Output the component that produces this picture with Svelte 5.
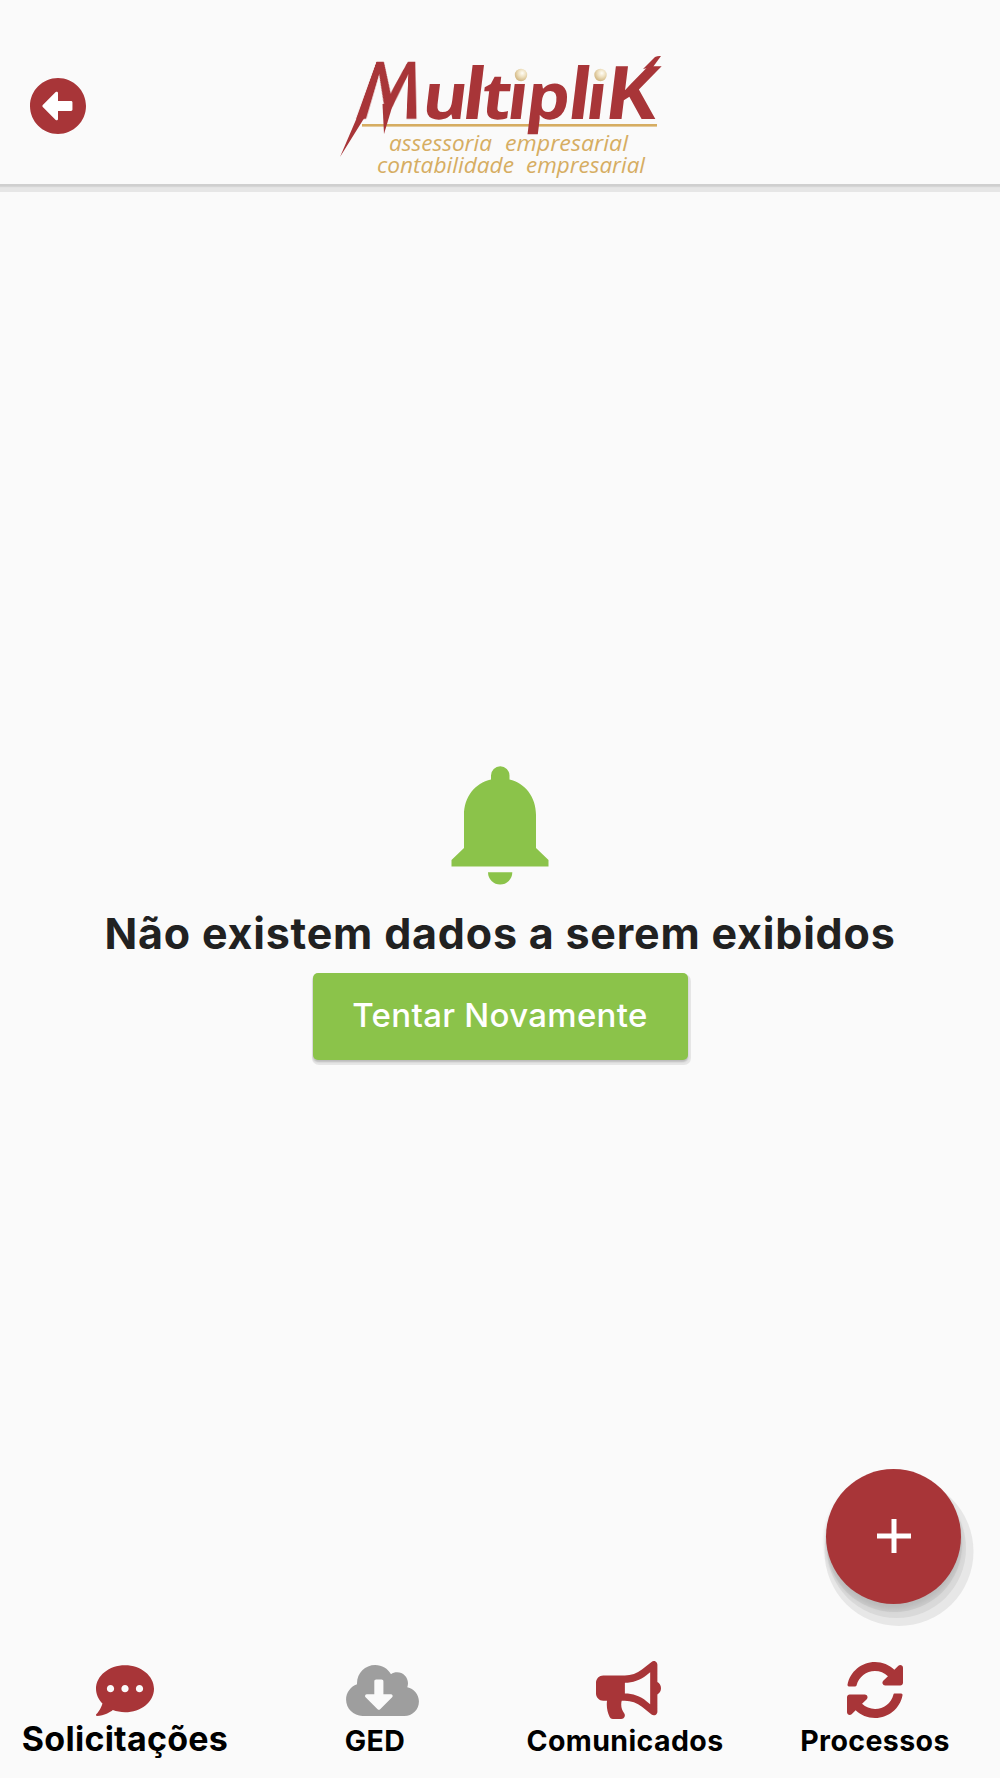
<script lang="ts">
  interface Tab {
    label: string;
    viewBox: string;
    width: number;
    height: number;
    path: string;
    active: boolean;
    large?: boolean;
    shift?: number;
  }

  const tabs: Tab[] = [
    {
      label: 'Solicitações',
      viewBox: '0 32 512 448',
      width: 58,
      height: 51,
      active: true,
      large: true,
      path: 'M256 32C114.6 32 0 125.1 0 240c0 49.6 21.4 95 57 130.7C44.5 421.1 2.7 466 2.2 466.5c-2.2 2.3-2.8 5.7-1.5 8.7S4.8 480 8 480c66.3 0 116-31.8 140.6-51.4 32.7 12.3 69 19.4 107.4 19.4 141.4 0 256-93.1 256-208S397.4 32 256 32zM128 272c-17.7 0-32-14.3-32-32s14.3-32 32-32 32 14.3 32 32-14.3 32-32 32zm128 0c-17.7 0-32-14.3-32-32s14.3-32 32-32 32 14.3 32 32-14.3 32-32 32zm128 0c-17.7 0-32-14.3-32-32s14.3-32 32-32 32 14.3 32 32-14.3 32-32 32z',
    },
    {
      label: 'GED',
      viewBox: '0 32 640 448',
      width: 73,
      height: 51,
      active: false,
      shift: 15,
      path: 'M537.6 226.6c4.1-10.7 6.4-22.4 6.4-34.6 0-53-43-96-96-96-19.7 0-38.1 6-53.3 16.2C367 64.2 315.3 32 256 32c-88.4 0-160 71.6-160 160 0 2.7.1 5.4.2 8.1C40.2 219.8 0 273.2 0 336c0 79.5 64.5 144 144 144h368c70.7 0 128-57.3 128-128 0-61.9-44-113.6-102.4-125.4zm-132.9 88.7L299.3 420.7c-6.2 6.2-16.4 6.2-22.6 0L171.3 315.3c-10.1-10.1-2.9-27.3 11.3-27.3H248V176c0-8.8 7.2-16 16-16h48c8.8 0 16 7.2 16 16v112h65.4c14.2 0 21.4 17.2 11.3 27.3z',
    },
    {
      label: 'Comunicados',
      viewBox: '0 0 576 512',
      width: 65,
      height: 58,
      active: true,
      shift: 7,
      path: 'M576 240c0-23.63-12.95-44.04-32-55.12V32.01C544 23.26 537.02 0 512 0c-7.12 0-14.19 2.38-19.98 7.02l-85.03 68.03C364.28 109.19 310.66 128 256 128H64c-35.35 0-64 28.65-64 64v96c0 35.35 28.65 64 64 64h33.7c-1.39 10.48-2.18 21.14-2.18 32 0 39.77 9.26 77.35 25.56 110.94 5.19 10.69 16.52 17.06 28.4 17.06h74.28c26.05 0 41.69-29.84 25.9-50.56-16.4-21.52-26.15-48.36-26.15-77.44 0-11.11 1.62-21.79 4.41-32H256c54.66 0 108.28 18.81 150.98 52.95l85.03 68.03a32.023 32.023 0 0 0 19.98 7.02c24.92 0 32-22.78 32-32V295.13C563.05 284.04 576 263.63 576 240zm-96 141.42l-33.05-26.44C392.95 311.78 325.12 288 256 288v-96c69.12 0 136.95-23.78 190.95-66.98L480 98.58v282.84z',
    },
    {
      label: 'Processos',
      viewBox: '8 8 496 496',
      width: 56,
      height: 56,
      active: true,
      path: 'M370.72 133.28C339.458 104.008 298.888 87.962 255.848 88c-77.458.068-144.328 53.178-162.791 126.85-1.344 5.363-6.122 9.15-11.651 9.15H24.103c-7.498 0-13.194-6.807-11.807-14.176C33.933 94.924 134.813 8 256 8c66.448 0 126.791 26.136 171.315 68.685L463.03 40.97C478.149 25.851 504 36.559 504 57.941V192c0 13.255-10.745 24-24 24H345.941c-21.382 0-32.09-25.851-16.971-40.971l41.75-41.749zM32 296h134.059c21.382 0 32.09 25.851 16.971 40.971l-41.75 41.75c31.262 29.273 71.835 45.319 114.876 45.28 77.418-.07 144.315-53.144 162.787-126.849 1.344-5.363 6.122-9.15 11.651-9.15h57.304c7.498 0 13.194 6.807 11.807 14.176C478.067 417.076 377.187 504 256 504c-66.448 0-126.791-26.136-171.315-68.685L48.97 471.03C33.851 486.149 8 475.441 8 454.059V320c0-13.255 10.745-24 24-24z',
    },
  ];
</script>

<div class="screen">
  <header class="top-bar">
    <button class="back" aria-label="Voltar">
      <svg viewBox="8 8 496 496" width="56" height="56">
        <circle cx="256" cy="256" r="240" fill="#fff" />
        <path fill="#a83538" d="M256 504C119 504 8 393 8 256S119 8 256 8s248 111 248 248-111 248-248 248zm116-292H256v-70.9c0-10.7-13-16.1-20.5-8.5L121.2 247.5c-4.7 4.7-4.7 12.2 0 16.9l114.3 114.9c7.6 7.6 20.5 2.2 20.5-8.5V300h116c6.6 0 12-5.4 12-12v-64c0-6.6-5.4-12-12-12z" />
      </svg>
    </button>
    <div class="logo">
      <span class="initial">M</span>
      <svg viewBox="0 0 340 144" width="340" height="144">
        <defs>
          <radialGradient id="pearl" cx="0.6" cy="0.35" r="0.7">
            <stop offset="0" stop-color="#fffdf6" />
            <stop offset="0.45" stop-color="#eee0bf" />
            <stop offset="1" stop-color="#cdb078" />
          </radialGradient>
        </defs>
        <rect x="32" y="84" width="295" height="2.6" fill="#d6ad62" />
        <!-- Strokes that run out of the first and last letters -->
        <path class="flourish" d="M10 117L28 75L36 76L33 80Z" />
        <path class="flourish" d="M52.500 64L63 64L54 94Z" />
        <path class="flourish" d="M313 29L325 17Q328 15.500 331 16L323 27Z" />
        <text
          class="wordmark"
          transform="translate(0 79.4) skewX(-7) scale(1.08 1)"
          x="83.500 120.300 138.300 162 179.600 218 235 252"
        >u<tspan class="tall">l</tspan>tıp<tspan class="tall">l</tspan>ı<tspan class="final">K</tspan></text>
        <circle cx="191" cy="35" r="6.2" fill="url(#pearl)" />
        <circle cx="270.5" cy="35" r="6.2" fill="url(#pearl)" />
        <text class="tagline" x="59" y="111" textLength="103" lengthAdjust="spacingAndGlyphs">assessoria</text>
        <text class="tagline" x="175" y="111" textLength="123" lengthAdjust="spacingAndGlyphs">empresarial</text>
        <text class="tagline" x="47" y="132.5" textLength="137" lengthAdjust="spacingAndGlyphs">contabilidade</text>
        <text class="tagline" x="196" y="132.5" textLength="119" lengthAdjust="spacingAndGlyphs">empresarial</text>
      </svg>
    </div>
  </header>

  <main class="empty">
    <svg viewBox="0 0 98 120" width="98" height="120" fill="#8bc34a">
      <path d="M13 49C13 31 24 17 40 13.500V9.500A9.250 9.250 0 0 1 58.500 9.500V13.500C74 17 85 31 85 49V82L97.500 94V100.500H.500V94L13 82Z" />
      <path d="M37 106.300H61.300A12.150 12.150 0 0 1 37 106.300Z" />
    </svg>
    <h1>Não existem dados a serem exibidos</h1>
    <button class="retry">Tentar Novamente</button>
  </main>

  <nav class="tabs">
    {#each tabs as tab (tab.label)}
      <a class="tab" class:muted={!tab.active} class:large={tab.large} href="#top">
        <span class="icon" style="padding-left: {tab.shift ?? 0}px">
          <svg viewBox={tab.viewBox} width={tab.width} height={tab.height}>
            <path d={tab.path} />
          </svg>
        </span>
        <span class="label">{tab.label}</span>
      </a>
    {/each}
  </nav>

  <button class="fab" aria-label="Adicionar">
    <svg viewBox="0 0 34 34" width="34" height="34">
      <path d="M17 0V34M0 17H34" stroke="#fff" stroke-width="5" />
    </svg>
  </button>
</div>

<style>
  :global(body) {
    margin: 0;
    background: #fafafa;
  }

  .screen {
    position: relative;
    display: flex;
    flex-direction: column;
    height: 100vh;
    overflow: hidden;
    background: #fafafa;
    font-family: Inter, 'Liberation Sans', sans-serif;
  }

  button {
    padding: 0;
    border: 0;
    font-family: inherit;
  }

  .top-bar {
    display: grid;
    grid-template-columns: 1fr 340px 1fr;
    flex-shrink: 0;
    height: 184px;
    box-sizing: border-box;
    padding-top: 40px;
    background: #fafafa;
    box-shadow:
      0 2px 1px #cfcfcf,
      0 3px 1px #d6d6d6,
      0 8px 0 #e6e6e6;
  }

  .back {
    width: 56px;
    height: 56px;
    margin: 38px 0 0 30px;
    background: none;
  }

  .back svg,
  .logo svg {
    display: block;
  }

  .logo {
    position: relative;
  }

  /* Splayed M: narrower at the top than at the feet */
  .initial {
    position: absolute;
    top: 9.8px;
    left: 20px;
    color: #a83538;
    font-family: Lato, sans-serif;
    font-size: 78px;
    font-weight: 900;
    line-height: 78px;
    transform: matrix3d(0.97, 0, 0, 0, -0.55, 1.57, 0, -0.0098, 0, 0, 1, 0, 0, 0, 0, 1);
    transform-origin: 7px 69.2px;
  }

  .flourish {
    fill: #a83538;
  }

  .wordmark {
    fill: #a83538;
    font-family: 'Open Sans', 'Noto Sans', sans-serif;
    font-size: 64px;
    font-weight: 700;
  }

  .tall {
    font-size: 71px;
  }

  .final {
    font-size: 74px;
  }

  .tagline {
    fill: #d6ad62;
    font-family: 'Open Sans', 'Noto Sans', sans-serif;
    font-size: 22px;
    font-style: italic;
  }

  .empty {
    display: flex;
    flex: 1;
    flex-direction: column;
    align-items: center;
    justify-content: center;
    padding-bottom: 9px;
  }

  h1 {
    margin: 19.5px 0 11.5px;
    color: #212121;
    font-size: 43px;
    font-weight: 650;
    line-height: 56px;
    letter-spacing: 0.8px;
    white-space: nowrap;
  }

  .retry {
    width: 375px;
    height: 87px;
    padding-bottom: 3px;
    border-radius: 5px;
    background: #8bc34a;
    box-shadow:
      0 2px 2px #bbb,
      1px 3px 0 2px #e6e6e6;
    color: #fff;
    font-size: 33px;
    font-weight: 500;
    letter-spacing: 0.3px;
  }

  .tabs {
    display: grid;
    grid-template-columns: repeat(4, 1fr);
    flex-shrink: 0;
    height: 128px;
  }

  .tab {
    display: flex;
    flex-direction: column;
    align-items: center;
    color: #000;
    text-decoration: none;
  }

  .icon {
    display: flex;
    align-items: center;
    height: 60px;
    margin-top: 10px;
    fill: #a83538;
  }

  .muted .icon {
    fill: #9e9e9e;
  }

  .label {
    font-size: 28.5px;
    font-weight: 650;
    line-height: 42px;
    letter-spacing: 0.4px;
  }

  .large .label {
    font-size: 34px;
    line-height: 38px;
    letter-spacing: 0.25px;
  }

  .fab {
    position: absolute;
    right: 39px;
    bottom: 174.5px;
    display: flex;
    align-items: center;
    justify-content: center;
    width: 135px;
    height: 135px;
    border-radius: 50%;
    background: #a83538;
    box-shadow:
      0 5px 4px #bbb,
      1px 8px 0 0 #cbcbcb,
      3px 12px 0 2px #d9d9d9,
      5.5px 15px 0 7px #e7e7e7;
  }
</style>
